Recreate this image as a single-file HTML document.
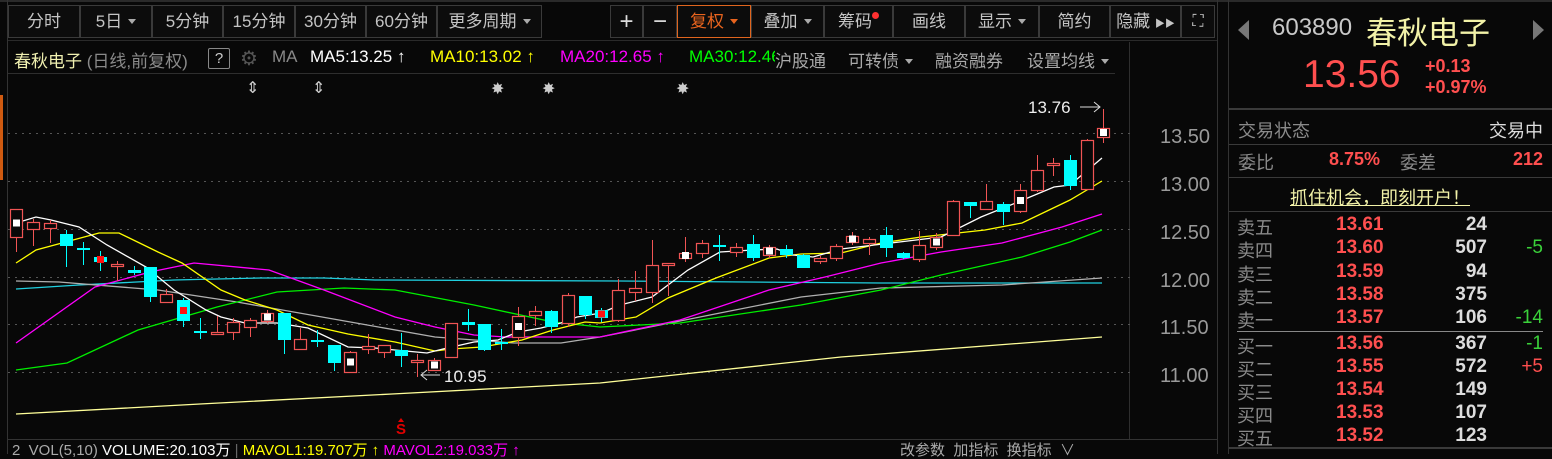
<!DOCTYPE html>
<html><head><meta charset="utf-8"><style>
*{margin:0;padding:0;box-sizing:border-box}
body{width:1552px;height:454px;background:#080808;overflow:hidden;position:relative;font-family:"Liberation Sans","Noto Sans CJK SC",sans-serif;color:#c8c8c8}
.a{position:absolute;white-space:nowrap}
.tb{position:absolute;top:5px;height:33px;border:1px solid #3a3a3a;background:#0c0c0c;color:#c4c4c4;font-size:17px;line-height:31px;text-align:center}
.tri{display:inline-block;width:0;height:0;border-left:4px solid transparent;border-right:4px solid transparent;border-top:5px solid #aaa;vertical-align:middle;margin-left:6px;margin-top:-3px}
.r{color:#ff4f4f;font-weight:bold}
.g{color:#3ad13a}
.lbl{color:#8a8a8a}
.ax{position:absolute;left:1160px;font-size:20px;color:#9a9a9a}
</style></head><body>
<div class="a" style="left:0;top:0;width:1552px;height:2px;background:#2a2a2a"></div>
<div class="a" style="left:7px;top:0;width:1px;height:454px;background:#333"></div>
<div class="a" style="left:0;top:95px;width:3px;height:85px;background:#d05a10"></div>
<div class="a" style="left:1129px;top:42px;width:1px;height:398px;background:#2e2e2e"></div>
<div class="a" style="left:1217px;top:0;width:1px;height:454px;background:#333"></div>
<div class="a" style="left:1228px;top:0;width:1px;height:454px;background:#333"></div>
<div class="a" style="left:8px;top:40px;width:1209px;height:1px;background:#2a2a2a"></div>
<div class="a" style="left:8px;top:73px;width:1107px;height:1px;background:#2e2e2e"></div>

<div class="tb" style="left:8px;width:72px">分时</div>
<div class="tb" style="left:80px;width:72px">5日<span class="tri"></span></div>
<div class="tb" style="left:152px;width:71px">5分钟</div>
<div class="tb" style="left:223px;width:72px">15分钟</div>
<div class="tb" style="left:295px;width:71px">30分钟</div>
<div class="tb" style="left:366px;width:71px">60分钟</div>
<div class="tb" style="left:437px;width:105px">更多周期<span class="tri"></span></div>
<div class="tb" style="left:610px;width:33px;font-size:24px;color:#ddd">+</div>
<div class="tb" style="left:643px;width:34px;font-size:24px;color:#ddd">−</div>
<div class="tb" style="left:677px;width:74px;border-color:#e0651e;color:#e8641e">复权<span class="tri" style="border-top-color:#e8641e"></span></div>
<div class="tb" style="left:751px;width:73px">叠加<span class="tri"></span></div>
<div class="tb" style="left:824px;width:69px">筹码<span style="display:inline-block;width:7px;height:7px;border-radius:50%;background:#ff3030;vertical-align:top;margin-top:6px"></span></div>
<div class="tb" style="left:893px;width:72px">画线</div>
<div class="tb" style="left:965px;width:74px">显示<span class="tri"></span></div>
<div class="tb" style="left:1039px;width:71px">简约</div>
<div class="tb" style="left:1110px;width:71px">隐藏 <span style="font-size:10px">▶▶</span></div>
<div class="tb" style="left:1181px;width:34px;font-size:16px">⛶</div>

<div class="a" style="left:14px;top:47px;font-size:17px;color:#f0f0b0">春秋电子 <span style="color:#8a8a8a">(日线,前复权)</span></div>
<div class="a" style="left:208px;top:48px;width:22px;height:21px;border:1px solid #888;border-radius:2px;font-size:15px;line-height:19px;text-align:center;color:#ccc">?</div>
<div class="a" style="left:240px;top:46px;font-size:20px;color:#555">⚙</div>
<div class="a" style="left:272px;top:47px;font-size:17px;color:#888">MA</div>
<div class="a" style="left:310px;top:47px;font-size:17px;color:#fff">MA5:13.25 ↑</div>
<div class="a" style="left:430px;top:47px;font-size:17px;color:#ffff00">MA10:13.02 ↑</div>
<div class="a" style="left:560px;top:47px;font-size:17px;color:#ff00ff">MA20:12.65 ↑</div>
<div class="a" style="left:689px;top:47px;width:86px;overflow:hidden;font-size:17px;color:#00ff00">MA30:12.46</div>
<div class="a" style="left:775px;top:47px;font-size:17px;color:#aaa">沪股通</div>
<div class="a" style="left:848px;top:47px;font-size:17px;color:#aaa">可转债<span class="tri"></span></div>
<div class="a" style="left:935px;top:47px;font-size:17px;color:#aaa">融资融券</div>
<div class="a" style="left:1027px;top:47px;font-size:17px;color:#aaa">设置均线<span class="tri"></span></div>

<div class="ax" style="top:126px">13.50</div>
<div class="ax" style="top:174px">13.00</div>
<div class="ax" style="top:222px">12.50</div>
<div class="ax" style="top:270px">12.00</div>
<div class="ax" style="top:317px">11.50</div>
<div class="ax" style="top:365px">11.00</div>

<svg class="a" style="left:0;top:0" width="1217" height="454" viewBox="0 0 1217 454">
<g stroke="#555" stroke-dasharray="2,5" stroke-width="1">
<line x1="8" y1="133.5" x2="1133" y2="133.5"/><line x1="8" y1="181.5" x2="1133" y2="181.5"/><line x1="8" y1="229.5" x2="1133" y2="229.5"/><line x1="8" y1="277.5" x2="1133" y2="277.5"/><line x1="8" y1="324.5" x2="1133" y2="324.5"/><line x1="8" y1="372.5" x2="1133" y2="372.5"/>
</g>
<g fill="none" stroke-width="1.3">
<polyline stroke="#ffff99" points="16,414 200,404 392,394 600,383 841,357 1102,337"/>
<polyline stroke="#20d0e0" points="16,289 79,285 174,280 261,278 324,278 375,280 620,281 881,283 1102,283"/>
<polyline stroke="#b0b0b0" points="16,281 59,282 158,290 237,302 356,323 435,337 514,343 561,343 600,337 720,313 801,297 881,288 1002,285 1102,278"/>
<polyline stroke="#00ee00" points="16,370 67,363 138,330 217,307 277,292 344,288 395,290 474,305 553,322 600,327 680,323 801,305 881,290 941,275 1022,257 1070,242 1102,230"/>
<polyline stroke="#ff00ff" points="16,343 95,287 150,272 194,263 269,270 324,290 395,317 435,327 474,335 506,337 553,337 600,337 680,320 769,290 825,277 881,263 941,252 1002,243 1062,227 1102,214"/>
<polyline stroke="#ffff00" points="16,263 36,250 99,233 119,233 158,252 182,263 221,290 245,300 277,310 308,325 348,334 395,342 435,351 451,349 482,347 522,340 553,330 585,322 600,323 636,317 668,298 716,278 769,258 801,254 841,253 881,243 921,237 985,230 1022,223 1070,200 1102,181"/>
<polyline stroke="#ffffff" points="16,223 36,217 51,220 79,227 107,245 146,267 174,290 206,310 221,317 245,323 277,323 308,328 348,347 375,348 395,350 427,353 443,349 474,342 498,340 518,332 541,328 561,323 577,317 601,313 620,305 652,297 688,270 720,252 753,250 777,249 793,255 813,257 841,249 941,237 981,217 1018,202 1054,187 1070,185 1102,158"/>
</g>
<g id="c"></g>
<g fill="#ccc" font-size="16" font-family="DejaVu Sans">
<text x="246" y="93">⇕</text><text x="312" y="93">⇕</text>
<text x="491" y="94">✸</text><text x="542" y="94">✸</text><text x="676" y="94">✸</text>
</g>
<text x="396" y="434" fill="#e00000" font-size="15" font-weight="bold" font-family="Liberation Sans">S</text>
<path d="M401 418 l-3 4 h6 z" fill="#e00000"/>
<path d="M440 375 H422 M427 370 L421 375 L427 380" stroke="#ddd" fill="none"/>
<text x="444" y="382" fill="#eee" font-size="17" font-family="Liberation Sans">10.95</text>
<text x="1028" y="113" fill="#eee" font-size="17" font-family="Liberation Sans">13.76</text>
<path d="M1080 107 H1100 M1094 102 L1100 107 L1094 112" stroke="#ddd" fill="none"/>
</svg>

<div class="a" style="left:8px;top:439px;width:1209px;height:1px;background:#333"></div>
<div class="a" style="left:12px;top:444px;font-size:15px;color:#aaa;line-height:14px">2 &nbsp;VOL(5,10) <span style="color:#fff">VOLUME:20.103万</span> <span style="color:#666">|</span> <span style="color:#ffff00">MAVOL1:19.707万 ↑</span> <span style="color:#ff00ff">MAVOL2:19.033万 ↑</span></div>
<div class="a" style="left:900px;top:444px;font-size:15px;color:#aaa;line-height:14px">改参数 &nbsp;加指标 &nbsp;换指标 &nbsp;∨</div>

<div class="a" style="left:1238px;top:20px;width:0;height:0;border-top:10px solid transparent;border-bottom:10px solid transparent;border-right:11px solid #777"></div>
<div class="a" style="left:1533px;top:20px;width:0;height:0;border-top:10px solid transparent;border-bottom:10px solid transparent;border-left:11px solid #777"></div>
<div class="a" style="left:1272px;top:14px;font-size:24px;color:#c8c8c8">603890</div>
<div class="a" style="left:1366px;top:8px;font-size:31px;color:#f2f2a8">春秋电子</div>
<div class="a" style="left:1303px;top:53px;font-size:39px;color:#ff4f4f">13.56</div>
<div class="a" style="left:1425px;top:56px;font-size:18px;line-height:21px"><span class="r">+0.13<br>+0.97%</span></div>
<div class="a" style="left:1229px;top:108px;width:323px;height:2px;background:#3a3a3a"></div>
<div class="a lbl" style="left:1238px;top:117px;font-size:18px">交易状态</div>
<div class="a" style="right:9px;top:117px;font-size:18px;color:#ddd">交易中</div>
<div class="a" style="left:1229px;top:144px;width:323px;height:1px;background:#3a3a3a"></div>
<div class="a lbl" style="left:1238px;top:149px;font-size:18px">委比</div>
<div class="a r" style="left:1329px;top:149px;font-size:18px">8.75%</div>
<div class="a lbl" style="left:1400px;top:149px;font-size:18px">委差</div>
<div class="a r" style="right:9px;top:149px;font-size:18px">212</div>
<div class="a" style="left:1229px;top:177px;width:323px;height:1px;background:#3a3a3a"></div>
<div class="a" style="left:1290px;top:184px;font-size:18px;color:#f2f2a8;text-decoration:underline">抓住机会，即刻开户！</div>
<div class="a" style="left:1229px;top:211px;width:323px;height:1px;background:#3a3a3a"></div>
<div class="a" style="left:1237px;top:331px;width:306px;height:1px;background:#888"></div>
<div class="a" style="left:1229px;top:447px;width:323px;height:2px;background:#3a3a3a"></div>
<div id="ob"></div>
<script>
var rows=[["卖五","13.61","24",""],["卖四","13.60","507","-5"],["卖三","13.59","94",""],["卖二","13.58","375",""],["卖一","13.57","106","-14"],["买一","13.56","367","-1"],["买二","13.55","572","+5"],["买三","13.54","149",""],["买四","13.53","107",""],["买五","13.52","123",""]];
var ys=[214,237,261,284,307,333,356,379,402,425],h="";
rows.forEach(function(r,i){var y=ys[i];
h+='<div class="a lbl" style="left:1237px;top:'+y+'px;font-size:18px">'+r[0]+'</div>';
h+='<div class="a r" style="left:1336px;top:'+y+'px;font-size:19px">'+r[1]+'</div>';
h+='<div class="a" style="right:65px;top:'+y+'px;font-size:19px;font-weight:bold;color:#ddd">'+r[2]+'</div>';
if(r[3])h+='<div class="a" style="right:9px;top:'+y+'px;font-size:19px;color:'+(r[3][0]=="+"?"#ff4f4f":"#3ad13a")+'">'+r[3]+'</div>';});
document.getElementById("ob").innerHTML=h;
var C=[[16,"r",209,237,209,252,"w"],[33,"r",222,229,219,246],[50,"r",223,228,220,243],[66,"c",234,246,230,267],[83,"c",248,250,242,265],[100,"c",257,262,251,271,"r"],[117,"r",264,266,261,281],[134,"c",270,273,266,275],[150,"c",267,297,267,302],[166,"r",294,302,289,302],[183,"c",300,321,298,327,"r"],[200,"c",331,333,318,339],[217,"r",332,334,316,334],[233,"r",322,332,318,340],[250,"r",320,327,318,337],[267,"r",313,321,310,323,"w"],[284,"c",313,340,313,354],[300,"r",339,349,328,349],[317,"c",340,342,330,347],[334,"c",345,363,345,371],[350,"r",352,372,351,372,"w"],[368,"r",346,349,334,354],[384,"r",345,352,345,358],[401,"c",350,356,333,367],[417,"r",360,362,354,377],[434,"r",360,370,358,371,"w"],[451,"r",323,357,323,357],[468,"c",322,325,309,331],[484,"c",324,350,324,351],[501,"c",342,344,329,350],[518,"r",316,337,307,346,"w"],[535,"r",311,315,306,326],[551,"c",311,327,310,333],[568,"r",295,323,293,327],[585,"c",296,315,296,319],[601,"c",310,318,308,322,"r"],[618,"r",290,320,279,322],[635,"r",288,292,271,301],[652,"r",265,292,240,303],[668,"r",263,265,263,296],[685,"r",253,258,237,262,"w"],[702,"r",243,253,240,258],[719,"c",245,247,235,261],[736,"r",247,252,243,257],[753,"c",244,258,235,261],[769,"r",247,255,245,258,"w"],[786,"c",249,255,245,258],[803,"c",255,268,254,268],[820,"r",258,261,256,264],[836,"r",246,258,244,261],[852,"r",236,242,232,245,"w"],[869,"r",239,243,237,255],[886,"c",235,248,227,257],[903,"c",253,258,252,259],[919,"r",245,259,231,262],[936,"r",237,247,233,250,"w"],[953,"r",201,235,200,236],[970,"c",202,206,202,218],[986,"r",201,209,184,210],[1003,"c",204,212,202,225],[1020,"r",190,211,184,213,"w"],[1037,"r",170,190,155,192],[1053,"r",163,165,158,176],[1070,"c",160,186,155,190],[1087,"r",140,189,139,190],[1103,"r",128,137,109,143,"w"]];
var s="";
C.forEach(function(k){var x=k[0],red=k[1]=="r",t=k[2],b=Math.max(k[3],k[2]+2),col=red?"#f05454":"#00ffff";
s+='<line x1="'+(x+.5)+'" y1="'+k[4]+'" x2="'+(x+.5)+'" y2="'+k[5]+'" stroke="'+col+'" stroke-width="1"/>';
if(red)s+='<rect x="'+(x-5.5)+'" y="'+(t+.5)+'" width="12" height="'+(b-t)+'" fill="#080808" stroke="'+col+'" stroke-width="1.2"/>';
else s+='<rect x="'+(x-6)+'" y="'+t+'" width="13" height="'+(b-t)+'" fill="'+col+'"/>';
if(k[6])s+='<rect x="'+(x-3)+'" y="'+((t+b)/2-3.5)+'" width="7" height="7" fill="'+(k[6]=="w"?"#fff":"#ff1010")+'"/>';});
document.getElementById("c").innerHTML=s;
</script>
</body></html>
